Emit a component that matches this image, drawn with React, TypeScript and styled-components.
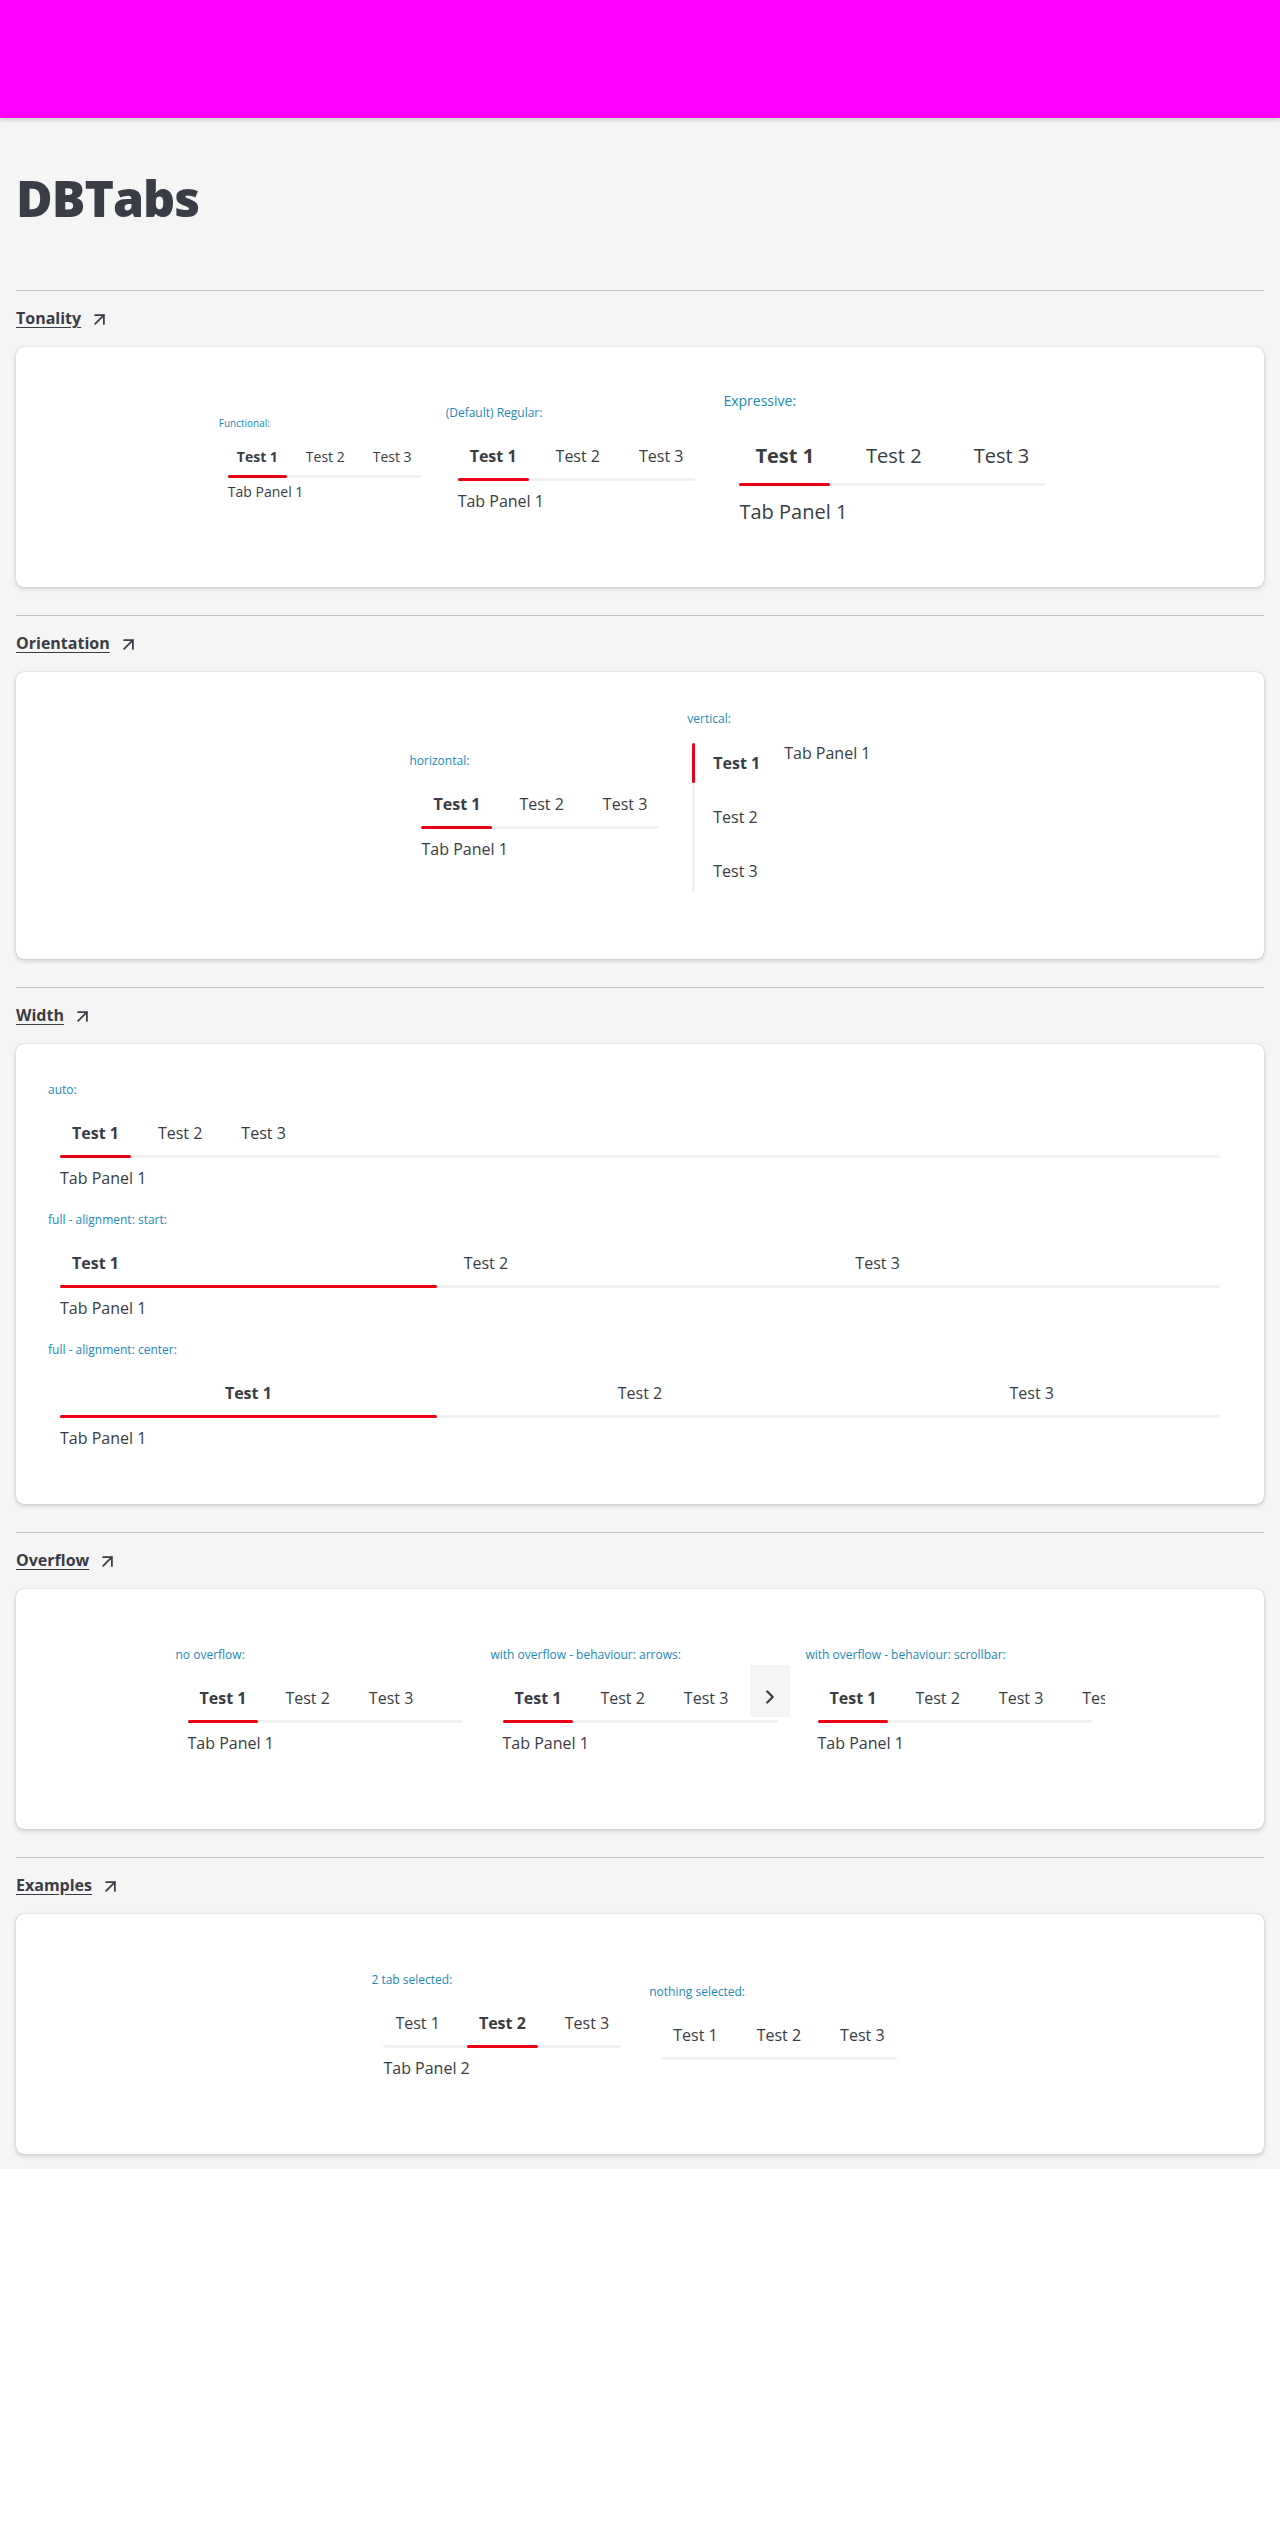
import React from 'react';
import styled, { createGlobalStyle } from 'styled-components';
import { ArrowUpRight, ChevronRight } from 'lucide-react';

type Density = 'functional' | 'regular' | 'expressive';

const sizes = {
  functional: { font: 14, label: 10, labelLine: 14, lead: 9, tabH: 36, pad: 9, gap: 10, panelGap: 4, panelLine: 20 },
  regular: { font: 16, label: 12, labelLine: 16, lead: 13, tabH: 44, pad: 12, gap: 15, panelGap: 8, panelLine: 24 },
  expressive: { font: 20, label: 14, labelLine: 20, lead: 17, tabH: 55, pad: 16, gap: 20, panelGap: 12, panelLine: 28 },
};

const GlobalStyle = createGlobalStyle`
  html, body {
    margin: 0;
    padding: 0;
    background: #ffffff;
  }
  body {
    font-family: "Open Sans", "Noto Sans", "Liberation Sans", sans-serif;
    color: #393c44;
  }
  * {
    box-sizing: border-box;
  }
`;

const TopBar = styled.header`
  position: relative;
  z-index: 1;
  height: 118px;
  background: #ff00ff;
  box-shadow: 0 2px 4px rgba(0, 0, 0, 0.18);
`;

const Page = styled.main`
  background: #f5f5f5;
  padding: 0 16px 15px;
`;

const Title = styled.h1`
  margin: 0;
  padding: 55px 0 67px;
  font-size: 50px;
  line-height: 50px;
  font-weight: 800;
  letter-spacing: -1px;
  color: #3a3d45;
`;

const Section = styled.section`
  display: flex;
  flex-direction: column;
  align-items: flex-start;
`;

const Divider = styled.hr`
  align-self: stretch;
  margin: 0;
  border: 0;
  border-top: 1px solid #c4c4c4;
`;

const SectionLink = styled.a`
  display: inline-flex;
  align-items: center;
  gap: 8px;
  margin-top: 15px;
  height: 24px;
  font-size: 16px;
  line-height: 24px;
  font-weight: 700;
  color: #3a3d45;
  text-decoration: underline;
  text-underline-offset: 3px;
  cursor: pointer;

  svg {
    margin-top: 3px;
  }
`;

const Card = styled.div<{ $last?: boolean }>`
  align-self: stretch;
  margin: 17px 0 ${(p) => (p.$last ? 0 : 28)}px;
  padding: 32px 32px 49px;
  background: #ffffff;
  border-radius: 8px;
  box-shadow: 0 0 1px rgba(0, 0, 0, 0.3), 0 2px 5px rgba(0, 0, 0, 0.16);
`;

const Row = styled.div`
  display: flex;
  justify-content: center;
  align-items: center;
  gap: 16px;
  min-height: 159px;
`;

const Stack = styled.div`
  display: flex;
  flex-direction: column;
  gap: 22px;
  padding: 6px 0 5px;
`;

const Group = styled.div<{ $fill?: boolean }>`
  display: flex;
  flex-direction: column;
  align-items: stretch;
  width: ${(p) => (p.$fill ? '100%' : 'auto')};
`;

const Label = styled.span<{ $d: Density }>`
  font-size: ${(p) => sizes[p.$d].label}px;
  line-height: ${(p) => sizes[p.$d].labelLine}px;
  color: #1c89b6;
  white-space: nowrap;
`;

const Frame = styled.div<{ $d: Density }>`
  padding: ${(p) => sizes[p.$d].lead}px ${(p) => sizes[p.$d].pad}px 0;
  overflow: hidden;
`;

const RowWrap = styled.div<{ $w?: number }>`
  position: relative;
  width: ${(p) => (p.$w ? `${p.$w}px` : 'auto')};
`;

const TabRow = styled.div<{ $d: Density }>`
  display: flex;
  gap: ${(p) => sizes[p.$d].gap}px;
  background: linear-gradient(#f1f1f1, #f1f1f1) left bottom / 100% 3px no-repeat;
  border-radius: 2px;
`;

const Tab = styled.div<{ $full?: boolean }>`
  display: flex;
  flex-direction: column;
  flex: ${(p) => (p.$full ? '1 1 0' : '0 0 auto')};
  min-width: 0;
`;

const TabText = styled.span<{ $d: Density; $active: boolean; $center?: boolean }>`
  display: flex;
  align-items: center;
  justify-content: ${(p) => (p.$center ? 'center' : 'flex-start')};
  height: ${(p) => sizes[p.$d].tabH}px;
  padding: 0 ${(p) => sizes[p.$d].pad}px;
  font-size: ${(p) => sizes[p.$d].font}px;
  font-weight: ${(p) => (p.$active ? 700 : 400)};
  color: #393c44;
  white-space: nowrap;
`;

const Indicator = styled.span<{ $active: boolean }>`
  height: 3px;
  border-radius: 2px;
  background: ${(p) => (p.$active ? '#ec0016' : 'transparent')};
`;

const Panel = styled.div<{ $d: Density }>`
  margin-top: ${(p) => sizes[p.$d].panelGap}px;
  font-size: ${(p) => sizes[p.$d].font}px;
  line-height: ${(p) => sizes[p.$d].panelLine}px;
  color: #393c44;
`;

const ScrollArrow = styled.button`
  position: absolute;
  top: -11px;
  right: -12px;
  width: 40px;
  height: 52px;
  display: flex;
  align-items: flex-start;
  justify-content: center;
  padding: 21px 0 0;
  border: 0;
  background: #f5f5f5;
  color: #393c44;
`;

const VGroup = styled.div`
  display: flex;
  flex-direction: column;
  padding: 7px 0 19px;
`;

const VBody = styled.div`
  display: flex;
  align-items: flex-start;
  margin: 16px 0 0 5px;
`;

const VList = styled.div`
  display: flex;
  flex-direction: column;
  gap: 14px;
  background: linear-gradient(#f1f1f1, #f1f1f1) left top / 3px 100% no-repeat;
`;

const VTab = styled.div`
  display: flex;
  height: 40px;
`;

const VIndicator = styled.span<{ $active: boolean }>`
  width: 3px;
  border-radius: 2px;
  background: ${(p) => (p.$active ? '#ec0016' : 'transparent')};
`;

const VTabText = styled.span<{ $active: boolean }>`
  display: flex;
  align-items: center;
  padding: 0 12px 0 18px;
  font-size: 16px;
  font-weight: ${(p) => (p.$active ? 700 : 400)};
  color: #393c44;
`;

const VPanel = styled.div`
  margin-left: 12px;
  font-size: 16px;
  line-height: 20px;
  color: #393c44;
`;

const defaultItems = ['Test 1', 'Test 2', 'Test 3'];
const longItems = ['Test 1', 'Test 2', 'Test 3', 'Test 4', 'Test 5'];

interface TabsProps {
  label: string;
  density?: Density;
  items?: string[];
  selected?: number;
  fill?: boolean;
  full?: boolean;
  center?: boolean;
  rowWidth?: number;
  arrows?: boolean;
}

const Tabs: React.FC<TabsProps> = ({
  label,
  density = 'regular',
  items = defaultItems,
  selected = 0,
  fill,
  full,
  center,
  rowWidth,
  arrows,
}) => (
  <Group $fill={fill}>
    <Label $d={density}>{label}</Label>
    <Frame $d={density}>
      <RowWrap $w={rowWidth}>
        <TabRow $d={density}>
          {items.map((item, i) => (
            <Tab key={item} $full={full}>
              <TabText $d={density} $active={i === selected} $center={center}>
                {item}
              </TabText>
              <Indicator $active={i === selected} />
            </Tab>
          ))}
        </TabRow>
        {arrows && (
          <ScrollArrow aria-label="scroll right">
            <ChevronRight size={22} strokeWidth={2.4} />
          </ScrollArrow>
        )}
      </RowWrap>
      <Panel $d={density}>{selected >= 0 ? `Tab Panel ${selected + 1}` : ''}</Panel>
    </Frame>
  </Group>
);

const VerticalTabs: React.FC<{ label: string }> = ({ label }) => (
  <VGroup>
    <Label $d="regular">{label}</Label>
    <VBody>
      <VList>
        {defaultItems.map((item, i) => (
          <VTab key={item}>
            <VIndicator $active={i === 0} />
            <VTabText $active={i === 0}>{item}</VTabText>
          </VTab>
        ))}
      </VList>
      <VPanel>Tab Panel 1</VPanel>
    </VBody>
  </VGroup>
);

const Heading: React.FC<{ title: string }> = ({ title }) => (
  <>
    <Divider />
    <SectionLink>
      {title}
      <ArrowUpRight size={21} strokeWidth={2} />
    </SectionLink>
  </>
);

const App: React.FC = () => (
  <>
    <GlobalStyle />
    <TopBar />
    <Page>
      <Title>DBTabs</Title>

      <Section>
        <Heading title="Tonality" />
        <Card>
          <Row>
            <Tabs label="Functional:" density="functional" />
            <Tabs label="(Default) Regular:" density="regular" />
            <Tabs label="Expressive:" density="expressive" />
          </Row>
        </Card>
      </Section>

      <Section>
        <Heading title="Orientation" />
        <Card>
          <Row>
            <Tabs label="horizontal:" />
            <VerticalTabs label="vertical:" />
          </Row>
        </Card>
      </Section>

      <Section>
        <Heading title="Width" />
        <Card>
          <Stack>
            <Tabs label="auto:" fill />
            <Tabs label="full - alignment: start:" fill full />
            <Tabs label="full - alignment: center:" fill full center />
          </Stack>
        </Card>
      </Section>

      <Section>
        <Heading title="Overflow" />
        <Card>
          <Row>
            <Tabs label="no overflow:" rowWidth={275} />
            <Tabs label="with overflow - behaviour: arrows:" rowWidth={275} items={longItems} arrows />
            <Tabs label="with overflow - behaviour: scrollbar:" rowWidth={275} items={longItems} />
          </Row>
        </Card>
      </Section>

      <Section>
        <Heading title="Examples" />
        <Card $last>
          <Row>
            <Tabs label="2 tab selected:" selected={1} />
            <Tabs label="nothing selected:" selected={-1} />
          </Row>
        </Card>
      </Section>
    </Page>
  </>
);

export default App;
